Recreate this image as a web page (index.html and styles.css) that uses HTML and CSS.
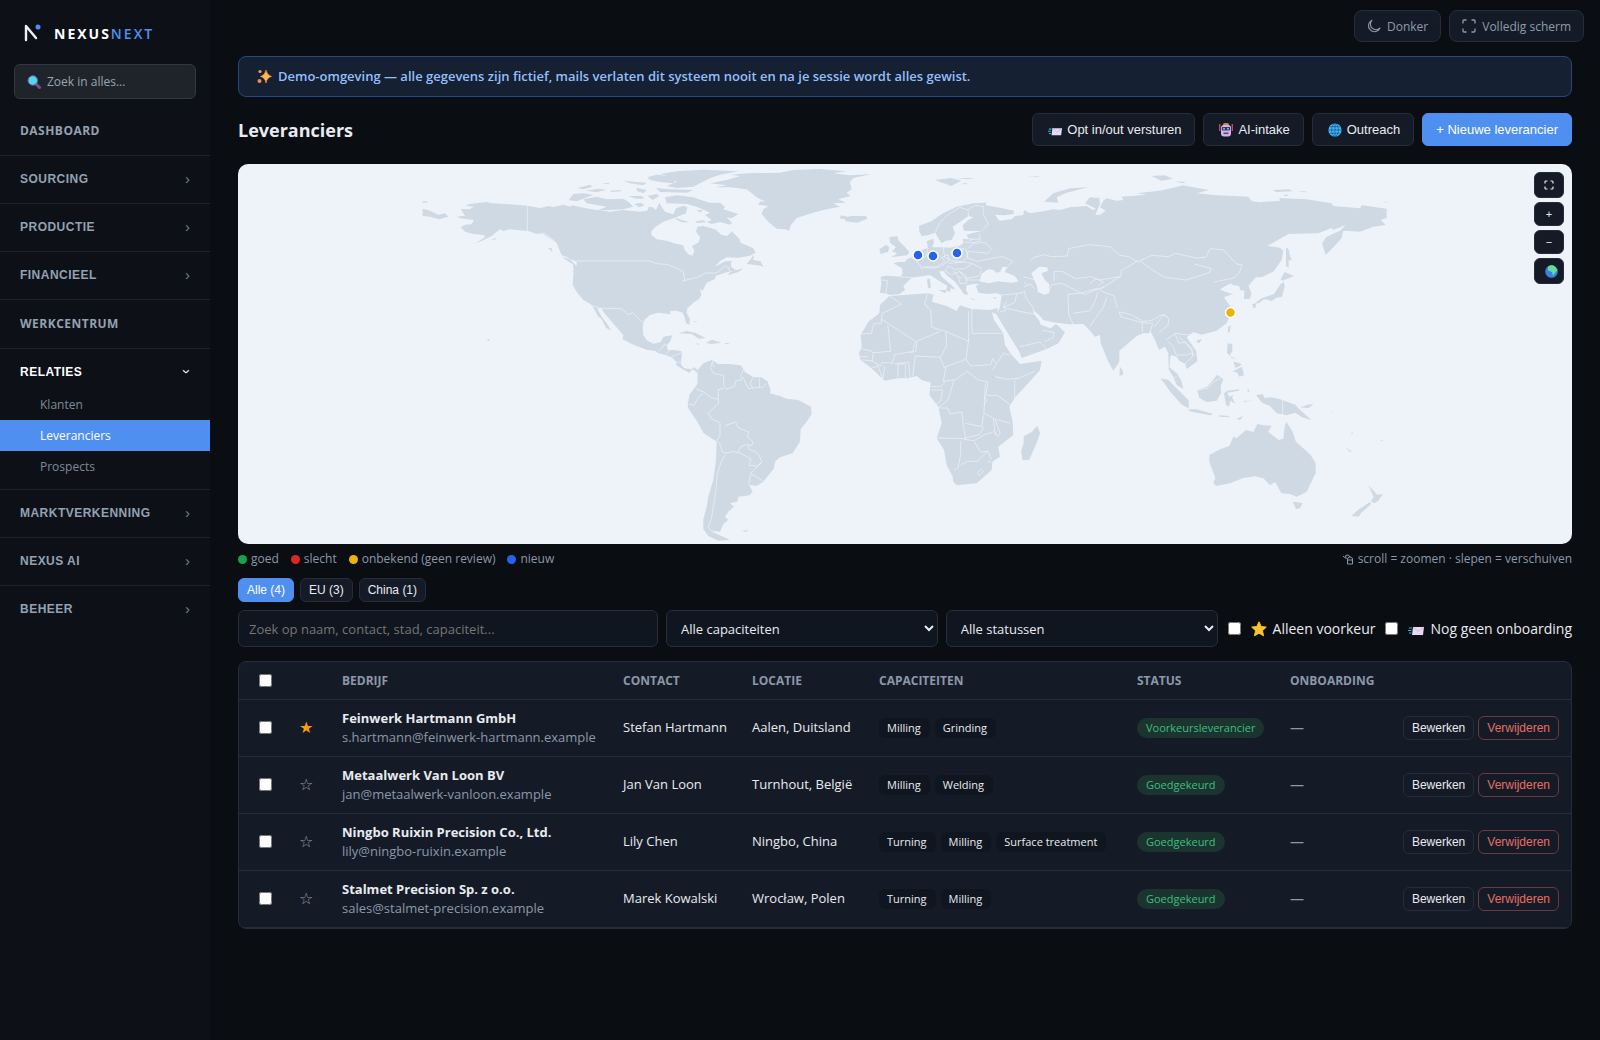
FILE: index.html
```html
<!DOCTYPE html>
<html lang="nl">
<head>
<meta charset="utf-8">
<title>Leveranciers – NexusNext</title>
<link rel="stylesheet" href="styles.css">
</head>
<body>
<svg class="defs" width="0" height="0" aria-hidden="true">
  <symbol id="i-mail" viewBox="0 0 16 16"><path d="M5 6h11l-1 8H4z" fill="#e6d9f5"/><path d="M5 6l5 4.500L16 6" fill="none" stroke="#cdbbe4"/><path d="M1 7h3M0 9.500h3.500M1 12h2.500" stroke="#35b3c9" stroke-width="1.200"/></symbol>
  <symbol id="i-star" viewBox="0 0 16 16"><path d="M8 .8l2.200 4.700 5.100.6-3.800 3.500 1 5.200L8 12.200l-4.500 2.600 1-5.200L.7 6.100l5.100-.6z" fill="#f6c22d" stroke="#f6c22d" stroke-linejoin="round"/></symbol>
</svg>
<div class="app">
  <aside class="sidebar">
    <a class="brand" href="#">
      <svg width="18" height="20" viewBox="0 0 18 20"><path d="M2 17V3l10 12" fill="none" stroke="#eef1f6" stroke-width="2.400" stroke-linecap="round" stroke-linejoin="round"/><circle cx="14" cy="4" r="2.500" fill="#4f8ff0"/></svg>
      <span class="brand-name">NEXUS<span class="brand-accent">NEXT</span></span>
    </a>
    <button class="global-search" type="button">
      <svg width="14" height="14" viewBox="0 0 14 14"><path d="M9 9l3.500 3.500" stroke="#7b4d8f" stroke-width="3" stroke-linecap="round"/><circle cx="5.800" cy="5.500" r="4.700" fill="#5fd0ee" stroke="#3b7fa8"/></svg>
      Zoek in alles...
    </button>
    <nav>
      <div class="group"><a class="group-head" href="#">DASHBOARD</a></div>
      <div class="group"><button class="group-head" type="button">SOURCING<span class="chev">›</span></button></div>
      <div class="group"><button class="group-head" type="button">PRODUCTIE<span class="chev">›</span></button></div>
      <div class="group"><button class="group-head" type="button">FINANCIEEL<span class="chev">›</span></button></div>
      <div class="group"><a class="group-head" href="#">WERKCENTRUM</a></div>
      <div class="group">
        <button class="group-head open" type="button">RELATIES<span class="chev">›</span></button>
        <a class="sub" href="#">Klanten</a>
        <a class="sub active" href="#">Leveranciers</a>
        <a class="sub" href="#">Prospects</a>
      </div>
      <div class="group"><button class="group-head" type="button">MARKTVERKENNING<span class="chev">›</span></button></div>
      <div class="group"><button class="group-head" type="button">NEXUS AI<span class="chev">›</span></button></div>
      <div class="group"><button class="group-head" type="button">BEHEER<span class="chev">›</span></button></div>
    </nav>
  </aside>

  <main class="main">
    <div class="topbar">
      <button class="top-btn" type="button"><svg width="14" height="14" viewBox="0 0 14 14"><path d="M5 1.200A6 6 0 1 0 13 9 5.500 5.500 0 0 1 5 1.200z" fill="none" stroke="currentColor" stroke-width="1.100" stroke-linejoin="round"/></svg>Donker</button>
      <button class="top-btn" type="button"><svg width="14" height="14" viewBox="0 0 14 14"><path d="M1 4.500V2a1 1 0 0 1 1-1h2.500M9.500 1H12a1 1 0 0 1 1 1v2.500M13 9.500V12a1 1 0 0 1-1 1H9.500M4.500 13H2a1 1 0 0 1-1-1V9.500" fill="none" stroke="currentColor" stroke-width="1.300"/></svg>Volledig scherm</button>
    </div>

    <div class="banner">
      <svg width="15" height="15" viewBox="0 0 15 15"><path d="M9 1q.8 5.200 5.500 6.500Q9.800 8.700 9 14 8.200 8.700 3.500 7.500 8.200 6.200 9 1z" fill="#ffb84f" stroke="#ffa04a" stroke-width=".6"/><circle cx="3" cy="2.500" r="1.600" fill="#f59b52"/><circle cx="2.500" cy="12" r="2" fill="#f58b52"/></svg>
      Demo-omgeving — alle gegevens zijn fictief, mails verlaten dit systeem nooit en na je sessie wordt alles gewist.
    </div>

    <header class="page-head">
      <h1>Leveranciers</h1>
      <div class="actions">
        <button class="btn" type="button"><svg width="14" height="14"><use href="#i-mail"/></svg>Opt in/out versturen</button>
        <button class="btn" type="button"><svg width="14" height="14" viewBox="0 0 14 14"><path d="M.7 1v7M13.300 1v7" stroke="#d8476a" stroke-width="1.300"/><rect x="4" y="0" width="6" height="3" rx="1.500" fill="#c98a3a"/><rect x="2" y="2" width="10" height="11.500" rx="3" fill="#d3b6e6"/><rect x="2.800" y="4" width="8.400" height="3.600" rx="1" fill="#3a2f66"/><circle cx="5" cy="5.800" r="1" fill="#62d4ee"/><circle cx="9" cy="5.800" r="1" fill="#62d4ee"/><rect x="4.500" y="9.500" width="5" height="1.600" fill="#6b3d86"/></svg>AI-intake</button>
        <button class="btn" type="button"><svg width="14" height="14" viewBox="0 0 14 14"><circle cx="7" cy="7" r="6.600" fill="#45b8f5"/><path d="M7 .4v13.200M.4 7h13.200M1.500 3.700h11M1.500 10.300h11" stroke="#175a94" stroke-width=".8"/><ellipse cx="7" cy="7" rx="3.300" ry="6.600" fill="none" stroke="#175a94" stroke-width=".8"/></svg>Outreach</button>
        <button class="btn primary" type="button">+ Nieuwe leverancier</button>
      </div>
    </header>

    <section class="map">
      <svg class="world" viewBox="0 0 1334 380" preserveAspectRatio="xMidYMid meet">
        <!-- Americas -->
        <g transform="translate(172 -4) scale(.33333)">
          <g class="land">
            <path d="M152 147L178 148 192 140 168 138 178 132 210 128 232 126 245 130 300 133 352 137 390 144 415 138 430 141 460 134 482 140 486 136 520 143 560 150 600 155 640 150 690 155 712 152 716 140 728 142 738 150 748 128 755 140 765 155 790 163 798 145 822 137 832 142 828 160 808 168 790 175 760 185 740 198 725 212 724 224 740 238 770 242 800 252 820 256 824 270 835 283 848 287 853 272 846 258 866 247 870 232 858 215 862 200 880 198 915 208 935 225 952 228 965 214 988 236 992 248 1030 265 1037 278 1020 287 985 293 950 292 930 303 915 320 945 304 968 303 962 318 975 330 1000 325 985 336 955 346 958 338 972 332 945 338 918 347 914 358 890 368 884 380 878 392 870 386 874 404 868 416 850 428 832 445 830 458 840 478 838 495 828 488 822 468 818 458 800 452 780 453 782 463 745 458 720 465 703 480 698 500 700 525 712 542 730 551 752 546 760 530 787 526 780 545 772 553 772 570 790 570 814 573 816 582 812 612 822 625 845 628 852 621 863 630 862 640 850 628 838 638 818 628 798 615 800 606 785 592 765 584 745 580 735 572 712 570 690 562 660 550 638 538 640 525 622 505 605 485 580 455 574 444 562 446 575 470 590 490 604 512 588 503 575 478 565 470 548 440 542 433 520 420 500 395 488 374 490 345 490 325 488 310 500 318 500 305 470 292 455 285 445 262 440 250 420 235 400 222 375 222 352 213 300 208 280 213 270 208 245 228 215 243 165 258 200 247 225 232 222 225 190 222 165 215 152 202 165 194 185 193 192 180 150 175 140 170 165 167Z"/>
            <path d="M38 146L60 152 85 164 105 160 115 170 88 178 60 170 38 168ZM38 124h14v4h-14zM242 238l18-4-4 5zM415 264l10 0 2 12zM455 290l25 8 20 20-20-10ZM1010 312L1032 284 1030 300 1052 304 1060 320 1045 316Z"/>
            <path d="M476 120L490 102 520 100 550 105 530 112 500 124ZM502 84L540 74 548 80 520 88ZM526 92l40-6 24 4-30 6zM575 72l20-4 4 4zM600 92l30-2 4 4-30 2zM640 62l40 4 30 2-10 8-40-6zM680 84l30 6-10 10-20-8zM655 108l40 0 8 8-25 0zM712 108l28-6 8 6-20 12zM520 118L560 110 590 118 640 116 655 125 670 140 640 148 560 152 590 140 530 130ZM672 132l20-4 12 8-16 6zM712 52L740 44 780 48 800 58 790 70 750 66 720 60ZM750 42L800 34 880 29 986 34 930 44 900 55 870 70 850 80 800 84 770 78 800 66 790 52ZM738 84L780 88 850 90 830 98 750 96ZM765 112L800 106 850 112 880 122 900 128 930 128 945 140 940 148 985 162 970 172 962 175 950 172 966 188 960 194 930 186 905 192 890 185 905 180 885 165 900 158 860 140 830 132 770 130ZM790 172l25 8 22 6-25 2zM860 150l18 0-6 8zM855 184l25-3 8 6-25 2z"/>
            <path d="M900 70L950 60 990 48 960 44 1010 40 1110 38 1150 30 1230 27 1310 34 1270 40 1320 46 1384 42 1330 54 1320 66 1325 88 1310 98 1322 108 1285 118 1308 128 1270 130 1290 140 1250 148 1210 158 1160 174 1142 196 1138 212 1125 208 1100 206 1075 186 1055 162 1060 148 1075 138 1045 134 1050 124 1068 126 1040 112 1010 88 960 82 915 82 950 76ZM1293 166l20 4 10-2 45 0 4 8-30 12-35-4-4-8-14 0z"/>
            <path d="M805 520l25-7 25 5 32 16-20 2-22-14zM858 550l10 1 2 3-10-1zM888 549l18-10 28 9-30 4zM945 549h11v3h-11zM852 484h8v2h-8zM232 537l6 1 1 5-6-1zM995 1112l22-2-10 6z"/>
            <path d="M863 630L880 610 905 600 925 612 960 612 992 616 1005 636 1030 652 1055 652 1072 664 1082 690 1080 700 1110 708 1130 716 1165 720 1203 740 1205 762 1190 785 1172 808 1170 845 1148 880 1110 892 1095 905 1092 925 1060 965 1040 978 1018 975 1028 995 1018 1006 985 1010 982 1025 960 1030 972 1040 955 1055 945 1070 955 1080 940 1092 930 1115 905 1115 940 1130 960 1140 925 1142 895 1128 880 1108 880 1078 890 1040 895 1010 910 960 918 900 920 845 880 818 862 785 835 745 833 735 838 705 862 672Z"/>
          </g>
          <g class="borders">
            <path d="M352 137V213l30 10 20-4 18 12 20 20M500 303H720l20 8 30 2 30 12 20 10 4 24-6 4 40-10 30-14h30l15-10 10-10 14 4 2 12M545 437l30 8h45l16 2 18 17 14-6 24 24 12 8M745 573l14-12 6-10 10 12M768 582l14-14M785 590l30-12M800 606h12M845 625v8"/>
            <path d="M908 603l-6 20 8 18 30 5 2 30 8 12 24-10 2-14 20-5-4-10 8-20M1000 650l4 14 12 22 20-3 24-2 8-10M1028 655l-8 16 8 12M1048 655v26M942 684l-18 6 2 40-32 30 12 18 24 10 0 40-10 14 10 10 6 22 12 6 20-6 16 4 6-16 16-8 20 2 2-12-16-12 4-16-30-12-10-18-32 12M924 718l-20-5-24-18-22-8M880 700l-14 10-14 26-14-4M984 876l38 20-4 20 22 2 16-12-8-18-10-12-20-8-4-12M1054 908l-32 32-6 34M1022 940l38 24M946 884l-12 20-12 40-4 45-8 50-6 40-10 22 10 12 25 4M908 608l4 14"/>
          </g>
          <path class="lake" d="M775 196l20-18 25 10 42 6-6 16-40-6zM962 306l24 0 12 18-16 6-16-8z"/>
        </g>
        <!-- Europe, Africa, Asia, Oceania -->
        <g transform="translate(602 -4) scale(.33333)">
          <g class="land">
            <path d="M128 400L120 398 124 370 122 350 140 347 182 350 188 340 186 325 160 310 175 306 195 306 200 298 218 290 232 278 245 270 264 264 260 244 280 236 282 248 276 262 300 262 330 263 358 258 370 250 368 236 386 238 380 224 395 220 425 213 372 212 368 196 385 180 400 172 386 168 365 182 338 200 345 220 335 240 318 242 305 250 296 236 286 218 262 226 245 228 238 216 237 198 275 183 305 162 350 140 400 130 440 128 436 136 480 143 522 152 520 162 495 166 465 164 478 182 515 178 525 168 550 165 552 150 570 160 600 155 640 148 660 150 690 142 740 138 758 150 768 146 735 130 750 112 778 114 780 132 766 164 780 164 797 152 780 142 790 122 800 115 830 122 850 120 845 110 920 104 890 100 960 92 1030 76 1072 84 1108 90 1070 100 1130 106 1180 108 1225 110 1235 123 1255 127 1320 122 1318 114 1400 118 1475 130 1480 138 1560 145 1566 136 1640 146 1640 174 1622 180 1637 195 1600 200 1560 215 1510 212 1505 235 1480 262 1457 285 1446 250 1460 230 1500 212 1517 195 1480 210 1475 204 1435 220 1345 222 1282 258 1320 263 1330 272 1325 300 1300 335 1265 352 1248 352 1225 378 1235 400 1230 416 1212 418 1213 392 1200 390 1198 378 1180 376 1172 370 1140 388 1155 395 1178 402 1152 412 1172 440 1172 460 1160 490 1130 512 1085 524 1060 516 1040 532 1068 572 1072 604 1040 627 1036 612 1018 602 1010 590 993 585 990 600 988 622 1010 640 1024 662 1030 686 1010 675 1000 650 986 628 985 580 975 560 957 570 945 540 932 515 925 520 908 520 890 528 838 572 838 605 820 632 805 605 782 550 780 525 765 530 748 510 730 492 690 493 650 488 632 485 610 480 600 468 582 452 580 460 598 482 602 494 632 505 648 492 675 517 655 550 620 567 545 594 538 575 510 530 470 465 480 440 485 405 470 400 440 402 415 398 408 378 418 372 400 372 380 376 378 390 386 404 372 403 360 385 345 365 320 345 310 333 298 334 305 350 340 380 345 390 332 384 330 396 318 390 322 378 285 355 270 345 250 348 215 353 190 378 195 390 180 402 150 405 136 400Z"/>
            <path d="M148 232l24-4 4 14 14 14 18 20-6 10-48 6 18-12-16-6 12-12-18-14zM118 268l20-14 10 8-4 14-22 6zM262 356h8v12h-8zM262 368h10v16h-8zM295 390l25 0-4 10zM385 415l20 2-2 3zM458 413l14-2-8 6zM284 60l50-6 30 8-30 16zM345 54l60 0-20 4zM368 70h14v3h-14zM612 125L640 100 690 85 745 82 680 98 650 112 655 128ZM934 48l40-2 25 10-35 6zM1002 64l36 2-10 4zM1298 90l50-2 10 6-50 2zM1370 94l30 0-6 3zM1332 104h12v4h-12zM560 50l42-1-10 3zM1634 125h6v3h-6z"/>
            <path d="M148 408L200 404 265 400 280 404 276 425 320 438 350 453 360 436 395 447 450 450 472 444 474 466 456 456 462 480 490 520 495 555 515 585 540 612 605 602 600 630 560 675 525 712 508 740 518 785 520 825 475 860 480 890 457 905 455 930 410 970 350 976 340 965 338 950 320 915 312 870 290 835 305 790 295 740 268 705 272 668 245 660 230 648 205 655 175 655 133 662 95 625 62 600 57 580 65 560 62 525 85 485 118 460 120 435ZM592 797l8 22-10 30-22 50-20 2-5-26 8-26 0-20 25-14z"/>
            <path d="M840 620l10 15-2 10-10 2zM962 655l22 4 40 40 22 22 0 24-20-10-35-40zM1045 748l25 0 50 14-10 4-62-12zM1138 766l30 2-2 4-28-2zM1190 776l20-8-10 12zM1072 690l30-10 30-36 18 14-8 20 2 20-14 24-30 4-22-12zM1152 700l10-8 36-4-2 4-34 6 6 12 14-6-6 8 10 20-14-10-6 18-8-6zM1165 500l8-4-4 20-6 2zM1070 540l16-2-8 12-8-4zM1163 550l14 2 0 20-8 16 20 8-14-2-14-16zM1180 605l10 2 16 6-8 6-12 4zM1178 634l28-14 6 26-14 4-6-12zM1143 626l12-14-12 14M1222 685l6 6-4 8zM1210 722l30 0-28 3zM1248 706l20-4 6 12 20-2 22 4 50 18 12 14 36 32-28-8-20-14-26 8-30-6-20-22-24-10zM1380 742l24-8 16-2-14 12zM1440 742l8 6zM1470 752l8 4-4 0zM1515 862l20 12-4 2zM1620 840l10 0-4 3zM1534 818h5v4h-5z"/>
            <path d="M1338 262l8 6 4 20 6 14-10-2 0 24-8-6zM1322 358l12-22 28 12-20 8-14 6zM1322 372l10-6 2 14-8 30-18 4-14 10-8-4-14-2-16 12-10-2 20-14 36-12zM1236 432l14-2-4 14-6 0z"/>
            <path d="M1108 885L1140 868 1168 858 1180 830 1190 834 1218 810 1240 816 1252 792 1270 796 1295 797 1284 815 1316 840 1330 836 1334 800 1339 785 1358 815 1368 845 1390 865 1412 885 1427 910 1427 940 1400 995 1370 1010 1350 1002 1325 1000 1305 966 1290 976 1270 955 1245 949 1210 954 1170 970 1128 978 1120 968 1126 955 1108 905ZM1358 1025l30 4-8 16-12 2zM1585 976l14 14 12 14 18-2-14 20-12 8-10-6 8-14zM1590 1026l4 6-30 26-8 12-22-2 20-18z"/>
          </g>
          <g class="lake">
            <path d="M418 364l6-22 20-14 16 2 8 8 12-2 8-16 14 2-8 14 30 12 12 16-20 4-40-4-30 6zM574 340l24-20 24 2 2 10-20 8 10 20 14 12 0 26-14 6-20-8-4-20-8-18zM385 240l20-3-15 5z"/>
          </g>
          <g class="borders">
            <path d="M124 360l18 2-4 38M182 350l36 4M212 290l28 24 4 12 20-6 32 2 30-18-2-20-18 8 8 12-28 20-20 0-18-4M245 290l-6-10M264 264l-4 22-14 12M310 264l4 28 20 10 36 4 12-14-2-22-20-6M380 268l30-24 28 6 18 18-12 12-60-6M372 246l46 4M380 236l40 2M418 220l4 24M384 276l-2 18 30 10 60-12 16-2 30 14-20 22M326 310l44-4 26 4 30 16M322 318l24 10 28-2 22-14M324 322l-10 10 20 12 26-10 16 22 40-8 8-16M340 332l14 16 6 22 18 0M360 336l18 10 2 24M378 360l40 0M356 350l10 4M286 218l12-28 26-26 36-22 24 8 2 24M384 150l20-14 28 4-4 20 18 32-22 22"/>
            <path d="M572 302l10-10 32-8 18 6 50-2 4-22 60-12 64 6 30 26 26 4 28 16 40-20 50 4 24-10 60 14 30-2 12-26 40 4 40 42 16 2-8 24-16 16-60 12M902 304l36 26 36 22 64 8 70-22 6-12-50-14M894 302l-50 30-2 16-60 40M642 364v-30l24 0 40 22 46-6 26 10 64-10M626 394l10-20 30-4 50 26 20 8 20-10 36-14M750 370l20-14 20 10-16 12M684 403l2 60 14 30M684 403l40-4 48-14 20 12 30 10 10 36M700 460l50-8 16-30 8-28M750 500l14-22 26-36 10-30M838 456l36 8 34 20 26-2 32-18 16 6M838 456l4 14 64 18 2 28M906 488l32 2-8 28M944 500l28-38 14 14-2 20-26 20M978 540l28-20 48 6M1006 522l10 28 20-4 28 40M985 545l14 14 10 26 30 0 16-6M1016 530l40 36 2 24-24 22M552 380l20-8 12 14M550 350l50 14M552 366l10 8M552 390l6 24 20 28 4 14M485 405l46-4 20-4M530 402l-6 26-34 14M488 442l50 12 42 8M480 456l20-6M500 424l-12 18M540 560l60-14 18 20M612 545l28-12 2-16-34-6M1075 690l30-6 14-18 24-12M1328 720v50M1000 654l10-4"/>
            <path d="M150 408l34 24-40 20-18 8M126 462l-2 28h-22l-8 30-34 2M126 478l100 66-8 30-54 10-8 28M144 498l8 76-52 4M262 402l-8 30 18 18 4 52 40 12 70 30v-90M396 446v74h92M386 538l-8 60-66 24-12-30M300 514l-70 30M318 514l2 42-18 36-76-4-8 60M230 544l-2 30-18 4M62 566l30 6 8 8-4 24M62 590l22 0M66 600l30 2 26 16 4-10 30 0M96 624l18-6 16 44M128 658l6-40M174 652v-40h22v44M206 610l4 44M164 612l44-6M318 620l-8 44 38-6 34-24 32 26 30 6M378 598l14 20 60-4 6-18 10 14M458 630l12-20 20-30 20 6M466 650l36 8 36-4 46-20M524 712l0-50 12-10M444 666l-6 40 34 0 44 32M436 670l-4 90 30 16 50 14M272 680h30l14-16M272 690l36 0-6 34-18 12M342 660l-18 60-30 24 30 0 6 18 36-6 4 44 8 36-90-2M376 790l50 10 4-34M432 800l-14 24-44 10M372 838l30 4 36-20 20-4M362 844v40l-8 40-12 6M362 914l20-10 30 0 32-32 10 26M402 844l20 32 22-2M460 776l6 50M466 780l14 40-6 10-14-20M432 708l8 14-8 14M412 938l10-10 8 6-12 12zM442 904l10 2"/>
          </g>
        </g>
        <g class="pins">
          <circle cx="680" cy="91" r="5" fill="#2563eb"/>
          <circle cx="695" cy="92" r="5" fill="#2563eb"/>
          <circle cx="719" cy="89" r="5" fill="#2563eb"/>
          <circle cx="992.500" cy="148.500" r="5" fill="#eab308"/>
        </g>
      </svg>
      <div class="map-tools">
        <button class="tool tall" type="button" aria-label="Volledig scherm"><svg width="10" height="10" viewBox="0 0 10 10"><path d="M1 3.500V2a1 1 0 0 1 1-1h1.500M6.500 1H8a1 1 0 0 1 1 1v1.500M9 6.500V8a1 1 0 0 1-1 1H6.500M3.500 9H2a1 1 0 0 1-1-1V6.500" fill="none" stroke="currentColor" stroke-width="1.200"/></svg></button>
        <button class="tool" type="button">+</button>
        <button class="tool" type="button">−</button>
        <button class="tool tall globe" type="button" aria-label="Wereld"><svg width="13" height="13" viewBox="0 0 13 13"><circle cx="6.500" cy="6.500" r="6.300" fill="#3b7fe0"/><path d="M3 1.500Q7-1 10 1.500L12.500 5 10 8 8 11 7 7 3 5.500z" fill="#5fdc9a"/></svg></button>
      </div>
    </section>

    <div class="legend">
      <span class="key"><i class="dot good"></i>goed</span>
      <span class="key"><i class="dot bad"></i>slecht</span>
      <span class="key"><i class="dot unknown"></i>onbekend (geen review)</span>
      <span class="key"><i class="dot new"></i>nieuw</span>
      <span class="hint"><svg width="12" height="12" viewBox="0 0 12 12"><path d="M5.500 11V6q0-2 2.500-2t2.500 2v5zM5.500 7h5M8 4q-.5-2-3-2T4 4.500 1 3" fill="none" stroke="currentColor"/></svg>scroll = zoomen · slepen = verschuiven</span>
    </div>

    <div class="chips">
      <button class="chip on" type="button">Alle (4)</button>
      <button class="chip" type="button">EU (3)</button>
      <button class="chip" type="button">China (1)</button>
    </div>

    <div class="filters">
      <input class="field" type="text" aria-label="Zoeken" placeholder="Zoek op naam, contact, stad, capaciteit...">
      <select class="field" aria-label="Capaciteit"><option>Alle capaciteiten</option></select>
      <select class="field" aria-label="Status"><option>Alle statussen</option></select>
      <label class="check"><input type="checkbox"><svg width="16" height="16"><use href="#i-star"/></svg>Alleen voorkeur</label>
      <label class="check"><input type="checkbox"><svg width="16" height="16"><use href="#i-mail"/></svg>Nog geen onboarding</label>
    </div>

    <div class="table-card">
      <table>
        <colgroup><col class="c-check"><col class="c-star"><col class="c-company"><col class="c-contact"><col class="c-place"><col class="c-caps"><col class="c-status"><col class="c-onb"></colgroup>
        <thead>
          <tr><th class="pick"><input type="checkbox" aria-label="Alles selecteren"></th><th></th><th>BEDRIJF</th><th>CONTACT</th><th>LOCATIE</th><th>CAPACITEITEN</th><th>STATUS</th><th>ONBOARDING</th><th></th></tr>
        </thead>
        <tbody>
          <tr><td class="pick"><input type="checkbox" aria-label="Selecteer Feinwerk Hartmann GmbH"></td><td><button class="fav on" type="button">★</button></td><td><strong>Feinwerk Hartmann GmbH</strong><div class="mail">s.hartmann@feinwerk-hartmann.example</div></td><td>Stefan Hartmann</td><td>Aalen, Duitsland</td><td><div class="tags"><span class="tag">Milling</span><span class="tag">Grinding</span></div></td><td><span class="pill">Voorkeursleverancier</span></td><td class="none">—</td><td class="row-actions"><button class="small" type="button">Bewerken</button><button class="small danger" type="button">Verwijderen</button></td></tr>
          <tr><td class="pick"><input type="checkbox" aria-label="Selecteer Metaalwerk Van Loon BV"></td><td><button class="fav" type="button">☆</button></td><td><strong>Metaalwerk Van Loon BV</strong><div class="mail">jan@metaalwerk-vanloon.example</div></td><td>Jan Van Loon</td><td>Turnhout, België</td><td><div class="tags"><span class="tag">Milling</span><span class="tag">Welding</span></div></td><td><span class="pill">Goedgekeurd</span></td><td class="none">—</td><td class="row-actions"><button class="small" type="button">Bewerken</button><button class="small danger" type="button">Verwijderen</button></td></tr>
          <tr><td class="pick"><input type="checkbox" aria-label="Selecteer Ningbo Ruixin Precision"></td><td><button class="fav" type="button">☆</button></td><td><strong>Ningbo Ruixin Precision Co., Ltd.</strong><div class="mail">lily@ningbo-ruixin.example</div></td><td>Lily Chen</td><td>Ningbo, China</td><td><div class="tags"><span class="tag">Turning</span><span class="tag">Milling</span><span class="tag">Surface treatment</span></div></td><td><span class="pill">Goedgekeurd</span></td><td class="none">—</td><td class="row-actions"><button class="small" type="button">Bewerken</button><button class="small danger" type="button">Verwijderen</button></td></tr>
          <tr><td class="pick"><input type="checkbox" aria-label="Selecteer Stalmet Precision"></td><td><button class="fav" type="button">☆</button></td><td><strong>Stalmet Precision Sp. z o.o.</strong><div class="mail">sales@stalmet-precision.example</div></td><td>Marek Kowalski</td><td>Wrocław, Polen</td><td><div class="tags"><span class="tag">Turning</span><span class="tag">Milling</span></div></td><td><span class="pill">Goedgekeurd</span></td><td class="none">—</td><td class="row-actions"><button class="small" type="button">Bewerken</button><button class="small danger" type="button">Verwijderen</button></td></tr>
        </tbody>
      </table>
    </div>
  </main>
</div>
</body>
</html>
```
FILE: styles.css
```css
:root {
  --bg: #0a0d12;
  --side: #0d1117;
  --panel: #151b26;
  --field: #10161f;
  --line: #262d38;
  --text: #e8ebf0;
  --muted: #8b98a9;
  --accent: #4f8ff0;
  --ui: "Segoe UI", "Open Sans", "Noto Sans", sans-serif;
  --btn: Arial, "Liberation Sans", sans-serif;
}
* { box-sizing: border-box; }
body { margin: 0; background: var(--bg); color: var(--text); font: 13px/19px var(--ui); }
a { color: inherit; text-decoration: none; }
button { font-family: var(--btn); color: inherit; cursor: pointer; }
svg { flex: none; }
.defs { position: absolute; }
.app { display: flex; min-height: 100vh; }

.sidebar { width: 210px; flex: none; background: var(--side); }
.brand { display: flex; align-items: center; gap: 12px; height: 64px; padding: 2px 24px 0; }
.brand-name { font-size: 14px; font-weight: 700; letter-spacing: 2px; color: #fff; }
.brand-accent { font-weight: 600; color: var(--accent); }
.global-search { display: flex; align-items: center; gap: 6px; width: 182px; height: 35px; margin: 0 14px 7px; padding: 0 12px; background: #1f242a; border: 1px solid #33383e; border-radius: 6px; color: #9aa5b3; font: 12px var(--ui); }
.group { border-top: 1px solid #1e242d; padding: 5px 0 7px; }
.group:first-child { border-top-color: transparent; }
.group-head { display: flex; align-items: center; justify-content: space-between; width: 100%; height: 36px; padding: 0 20px; background: none; border: 0; color: #94a1b2; font: 700 12px var(--ui); letter-spacing: 0.04em; }
button.group-head { height: 35px; font: 700 12px var(--btn); }
button.group-head.open { color: #fff; }
.chev { font: 400 15px var(--btn); letter-spacing: 0; color: #708090; }
.open .chev { transform: rotate(90deg); color: #fff; }
.sub { display: block; height: 31px; padding: 0 40px; font-size: 12px; line-height: 31px; color: #7e8a99; }
.sub.active { background: var(--accent); color: #fff; }

.main { flex: 1; min-width: 0; padding: 0 28px 28px; }
.topbar { display: flex; justify-content: flex-end; gap: 8px; margin-right: -12px; padding: 10px 0 14px; }
.top-btn { display: flex; align-items: center; gap: 6px; height: 32px; padding: 0 12px; background: var(--panel); border: 1px solid var(--line); border-radius: 8px; color: #8e9bac; font: 12px var(--ui); }
.banner { display: flex; align-items: center; gap: 6px; height: 41px; padding: 0 18px; background: #152033; border: 1px solid #27477c; border-radius: 8px; color: #93bffb; font-weight: 600; }
.page-head { display: flex; align-items: center; justify-content: space-between; height: 67px; padding-bottom: 2px; }
h1 { margin: 0; font-size: 18px; line-height: 24px; }
.actions { display: flex; gap: 8px; }
.btn { display: flex; align-items: center; gap: 5px; height: 33px; padding: 0 13px 0 15px; background: var(--panel); border: 1px solid var(--line); border-radius: 6px; font-size: 13px; }
.btn.primary { padding: 0 13px; background: var(--accent); border-color: var(--accent); color: #fff; }

.map { position: relative; height: 380px; background: #eef3fa; border-radius: 10px; overflow: hidden; }
.world { display: block; width: 100%; height: 100%; }
.land { fill: #cfd9e3; }
.lake { fill: #eef3fa; }
.borders { fill: none; stroke: #eef3fa; stroke-width: 2; stroke-linejoin: round; }
.pins { stroke: #fff; stroke-width: 1.5; }
.map-tools { position: absolute; top: 8px; right: 8px; display: flex; flex-direction: column; gap: 4px; }
.tool { display: flex; align-items: center; justify-content: center; width: 30px; height: 24px; padding: 0; background: var(--panel); border: 1px solid var(--line); border-radius: 6px; font-size: 11px; }
.tool.tall { height: 26px; }
.tool.globe { padding-left: 4px; }

.legend { display: flex; gap: 12px; height: 34px; padding-top: 6px; font-size: 12px; line-height: 18px; color: var(--muted); }
.key { display: flex; align-items: center; gap: 4px; height: 18px; }
.dot { width: 9px; height: 9px; border-radius: 50%; }
.good { background: #16a34a; }
.bad { background: #dc2626; }
.unknown { background: #eab308; }
.new { background: #2563eb; }
.hint { display: flex; align-items: center; gap: 4px; height: 18px; margin-left: auto; }
.chips { display: flex; gap: 6px; margin-bottom: 8px; }
.chip, .small { height: 24px; padding: 0 8px; background: var(--panel); border: 1px solid var(--line); border-radius: 6px; font-size: 12px; }
.chip.on { background: var(--accent); border-color: var(--accent); color: #fff; }
.filters { display: flex; align-items: center; gap: 8px; margin-bottom: 14px; }
.field { flex: 1 1 0; min-width: 0; height: 37px; padding: 0 10px; background: var(--field); border: 1px solid var(--line); border-radius: 6px; color: var(--text); font: 13px var(--ui); }
input.field { flex: 0 0 420px; }
.field::placeholder { color: #757575; }
.check { display: flex; align-items: center; gap: 6px; font-size: 14px; white-space: nowrap; }
input[type="checkbox"] { width: 13px; height: 13px; margin: 0; }
.check input[type="checkbox"] { margin: 0 4px 0 2px; }

.table-card { background: var(--panel); border: 1px solid var(--line); border-radius: 8px; overflow: hidden; }
table { width: 100%; border-collapse: collapse; }
th, td { height: 57px; padding: 0 0 0 13px; border-bottom: 1px solid var(--line); text-align: left; white-space: nowrap; }
th { height: 37px; font-size: 12px; font-weight: 700; color: var(--muted); }
.pick { padding-left: 20px; }
.pick input { display: block; }
.c-check { width: 47px; }
.c-star { width: 43px; }
.c-company { width: 281px; }
.c-contact { width: 129px; }
.c-place { width: 127px; }
.c-caps { width: 258px; }
.c-status { width: 153px; }
.fav { padding: 0; background: none; border: 0; font: 16px "DejaVu Sans", sans-serif; color: var(--muted); }
.fav.on { color: #f59e0b; }
.mail, .none { color: var(--muted); }
.none { font-size: 14px; }
.tags { display: flex; gap: 5px; }
.tag { height: 20px; padding: 0 9px 0 8px; background: var(--field); border-radius: 6px; font-size: 11px; line-height: 20px; }
.pill { display: inline-block; height: 20px; padding: 0 9px; background: #1b3430; border-radius: 10px; font-size: 11px; line-height: 20px; color: #3fbf7f; }
td.row-actions { padding-right: 12px; text-align: right; }
.small { margin-left: 4px; }
.small.danger { border-color: #6b3a40; color: #e56e65; }
```
